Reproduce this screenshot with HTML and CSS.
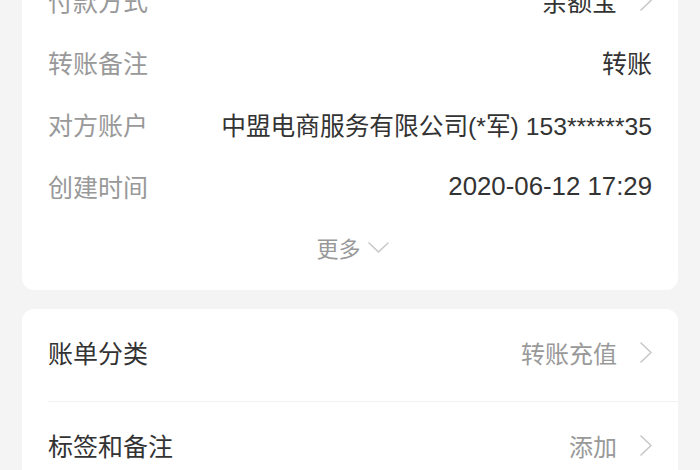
FILE: index.html
```html
<!DOCTYPE html>
<html lang="zh-CN">
<head>
<meta charset="utf-8">
<title>账单详情</title>
<link rel="stylesheet" href="styles.css">
</head>
<body>
<div class="page">
  <section class="card card-info">
    <div class="info-row">
      <span class="label">付款方式</span>
      <span class="value with-arrow">余额宝
        <svg class="arrow-right" width="12" height="21" viewBox="0 0 12 21"><polyline points="1,1 11,10.5 1,20" fill="none" stroke="#c8c8c8" stroke-width="1.6" stroke-linecap="round" stroke-linejoin="round"/></svg>
      </span>
    </div>
    <div class="info-row">
      <span class="label">转账备注</span>
      <span class="value">转账</span>
    </div>
    <div class="info-row">
      <span class="label">对方账户</span>
      <span class="value value-fit">中盟电商服务有限公司(*军) 153******35</span>
    </div>
    <div class="info-row">
      <span class="label">创建时间</span>
      <span class="value value-time">2020-06-12 17:29</span>
    </div>
    <div class="more-row">
      <span class="more-text">更多</span>
      <svg class="arrow-down" width="21" height="11" viewBox="0 0 21 11"><polyline points="1,1 10.5,10 20,1" fill="none" stroke="#c8c8c8" stroke-width="1.6" stroke-linecap="round" stroke-linejoin="round"/></svg>
    </div>
  </section>

  <section class="card card-menu">
    <div class="menu-row">
      <span class="menu-label">账单分类</span>
      <span class="menu-value">转账充值
        <svg class="arrow-right" width="12" height="21" viewBox="0 0 12 21"><polyline points="1,1 11,10.5 1,20" fill="none" stroke="#c8c8c8" stroke-width="1.6" stroke-linecap="round" stroke-linejoin="round"/></svg>
      </span>
    </div>
    <div class="menu-row">
      <span class="menu-label">标签和备注</span>
      <span class="menu-value">添加
        <svg class="arrow-right" width="12" height="21" viewBox="0 0 12 21"><polyline points="1,1 11,10.5 1,20" fill="none" stroke="#c8c8c8" stroke-width="1.6" stroke-linecap="round" stroke-linejoin="round"/></svg>
      </span>
    </div>
  </section>
</div>
</body>
</html>
```

FILE: styles.css
```css
html, body {
  margin: 0;
  padding: 0;
  background: #f4f4f4;
  height: 100%;
  overflow: hidden;
}

body {
  font-family: "Liberation Sans", "Noto Sans CJK SC", sans-serif;
  font-size: 25px;
  color: #333333;
}

.page {
  padding: 0 22px;
  display: flex;
  flex-direction: column;
  gap: 19px;
}

.card {
  background: #ffffff;
  border-radius: 12px;
}

.card-info {
  margin-top: -31px;
  padding: 0 26px 13px;
  display: flex;
  flex-direction: column;
}

.info-row {
  height: 62px;
  display: flex;
  align-items: center;
  justify-content: space-between;
}

.label {
  color: #999999;
  white-space: nowrap;
}

.value {
  color: #333333;
  white-space: nowrap;
  display: flex;
  align-items: center;
}

.value-fit {
  font-size: 24.7px;
}

.value-time {
  font-size: 25.8px;
}

.with-arrow .arrow-right {
  margin-left: 23px;
}

.menu-value .arrow-right {
  margin-left: 23px;
}

.more-row {
  height: 60px;
  display: flex;
  align-items: center;
  justify-content: center;
  gap: 7px;
  padding-left: 5px;
}

.more-text {
  color: #999999;
  font-size: 22px;
}

.card-menu {
  padding-left: 26px;
  display: flex;
  flex-direction: column;
}

.menu-row {
  height: 86px;
  padding: 0 26px 6px 0;
  display: flex;
  align-items: center;
  justify-content: space-between;
  border-bottom: 1px solid #f1f1f1;
}

.menu-label {
  color: #333333;
}

.menu-value {
  color: #999999;
  font-size: 24px;
  display: flex;
  align-items: center;
}
```
